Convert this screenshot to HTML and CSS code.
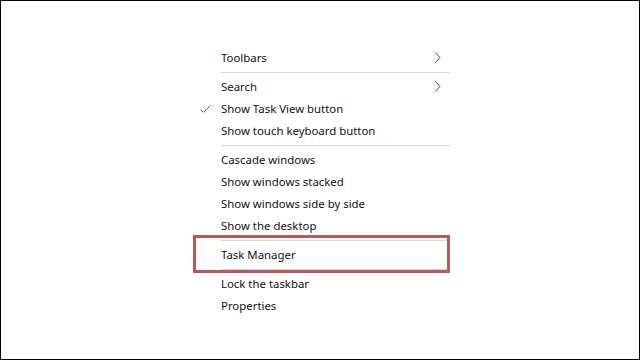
FILE: index.html
```html
<!DOCTYPE html>
<html>
<head>
<meta charset="utf-8">
<link rel="stylesheet" href="styles.css">
</head>
<body>
<div class="frame">
  <div class="menu">
    <div class="item"><span>Toolbars</span><svg class="chev" width="6" height="11" viewBox="0 0 6 11"><path d="M0.5 0.5 L5 5.5 L0.5 10.5" fill="none" stroke="#444" stroke-width="1"/></svg></div>
    <div class="sep"></div>
    <div class="item"><span>Search</span><svg class="chev" width="6" height="11" viewBox="0 0 6 11"><path d="M0.5 0.5 L5 5.5 L0.5 10.5" fill="none" stroke="#444" stroke-width="1"/></svg></div>
    <div class="item"><svg class="check" width="11" height="8" viewBox="0 0 11 8"><path d="M0.5 4.5 L3.5 7.2 L10.5 0.5" fill="none" stroke="#555" stroke-width="1"/></svg><span>Show Task View button</span></div>
    <div class="item"><span>Show touch keyboard button</span></div>
    <div class="sep"></div>
    <div class="item"><span>Cascade windows</span></div>
    <div class="item"><span>Show windows stacked</span></div>
    <div class="item"><span>Show windows side by side</span></div>
    <div class="item"><span>Show the desktop</span></div>
    <div class="sep"></div>
    <div class="item highlighted"><span>Task Manager</span></div>
    <div class="sep"></div>
    <div class="item"><span>Lock the taskbar</span></div>
    <div class="item"><span>Properties</span></div>
  </div>
</div>
</body>
</html>
```

FILE: styles.css
```css
html, body {
  margin: 0;
  padding: 0;
  background: #fff;
}
.frame {
  width: 640px;
  height: 360px;
  box-sizing: border-box;
  border: 1px solid #000;
  padding-top: 46px;
  padding-left: 189px;
  background: #fff;
}
.menu {
  width: 260px;
  display: flex;
  flex-direction: column;
}
.item {
  position: relative;
  box-sizing: border-box;
  height: 22px;
  display: flex;
  align-items: center;
  padding-left: 31px;
  padding-right: 8px;
  padding-bottom: 2px;
  font-family: "Noto Sans", "Open Sans", sans-serif;
  font-size: 11.4px;
  color: #111;
}
.item span {
  flex: 1;
}
.chev {
  display: block;
  margin-right: 1px;
}
.check {
  position: absolute;
  left: 10px;
  top: 7px;
}
.sep {
  height: 7px;
  display: flex;
  align-items: center;
  padding-left: 31px;
}
.sep::before {
  content: "";
  display: block;
  flex: 1;
  height: 1px;
  background: #d6d6d6;
}
.highlighted::after {
  content: "";
  position: absolute;
  left: 3px;
  right: 0;
  top: -9px;
  bottom: -7px;
  border: 3px solid #b85a5a;
}
```
